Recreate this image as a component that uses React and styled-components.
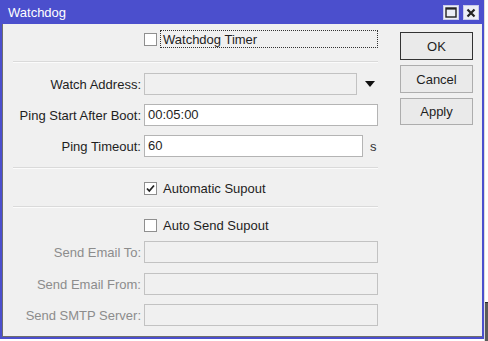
import React from 'react';
import styled, { createGlobalStyle } from 'styled-components';

const GlobalStyle = createGlobalStyle`
    html, body {
        margin: 0;
        padding: 0;
        background: #ffffff;
        font-family: "Liberation Sans", Arial, sans-serif;
        font-size: 13px;
    }
`;

const Desktop = styled.div`
    display: flex;
    width: 488px;
    height: 341px;
    overflow: hidden;
`;

const Window = styled.div`
    width: 484px;
    height: 339px;
    display: flex;
    flex-direction: column;
    box-sizing: border-box;
    background: #4b4fcd;
    padding: 0 2px 2px 2px;
`;

const TitleBar = styled.div`
    height: 24px;
    display: flex;
    align-items: center;
    padding-left: 6px;
    color: #ffffff;
    font-size: 13px;
`;

const TitleText = styled.div`
    flex: 1;
    padding-top: 1px;
`;

const TitleButtons = styled.div`
    display: flex;
    gap: 4px;
    margin-right: 3px;
    margin-top: 1px;
`;

const TitleButton = styled.div`
    width: 16px;
    height: 15px;
    box-sizing: border-box;
    background: #eceef6;
    border: 1px solid #c9cbe8;
    display: flex;
    align-items: center;
    justify-content: center;
`;

const Body = styled.div`
    flex: 1;
    display: flex;
    background: #f0f0f0;
    border-left: 1px solid #6e6e6e;
    border-bottom: 1px solid #6e6e6e;
`;

const Form = styled.div`
    width: 386px;
    display: flex;
    flex-direction: column;
`;

const Separator = styled.div`
    margin-left: 10px;
    width: 365px;
    height: 0;
    border-top: 1px solid #dadada;
    border-bottom: 1px solid #fbfbfb;
    margin-top: ${({ $top }) => $top}px;
`;

const CheckRow = styled.div`
    display: flex;
    align-items: center;
    height: 18px;
    padding-left: 141px;
    margin-top: ${({ $top }) => $top}px;
    color: #1e1e1e;
`;

const Box = styled.div`
    width: 13px;
    height: 13px;
    box-sizing: border-box;
    background: #ffffff;
    border: 1px solid #8f8f8f;
    display: flex;
    align-items: center;
    justify-content: center;
`;

const CheckLabel = styled.div`
    margin-left: 3px;
    height: 18px;
    line-height: 17px;
    box-sizing: border-box;
    padding-left: 2px;
    width: ${({ $width }) => ($width ? `${$width}px` : 'auto')};
    border: 1px ${({ $focus }) => ($focus ? 'dotted #333' : 'solid transparent')};
`;

const FieldRow = styled.div`
    display: flex;
    align-items: center;
    height: 22px;
    margin-top: ${({ $top }) => $top}px;
`;

const Label = styled.div`
    width: 138px;
    text-align: right;
    margin-right: 3px;
    white-space: nowrap;
    color: ${({ $disabled }) => ($disabled ? '#8c8c8c' : '#1e1e1e')};
`;

const Input = styled.div`
    width: ${({ $width }) => $width}px;
    height: 22px;
    box-sizing: border-box;
    border: 1px solid ${({ $disabled }) => ($disabled ? '#c2c2c2' : '#b4b4b4')};
    background: ${({ $disabled }) => ($disabled ? '#f0f0f0' : '#ffffff')};
    padding-left: 3px;
    line-height: 20px;
    color: #1e1e1e;
`;

const Unit = styled.div`
    margin-left: 7px;
    color: #333;
`;

const Arrow = styled.div`
    margin-left: 8px;
    width: 0;
    height: 0;
    border-left: 5px solid transparent;
    border-right: 5px solid transparent;
    border-top: 6px solid #111;
`;

const Buttons = styled.div`
    margin-left: 11px;
    padding-top: 8px;
    display: flex;
    flex-direction: column;
    gap: 5px;
`;

const Button = styled.div`
    width: 73px;
    height: ${({ $height }) => $height || 28}px;
    box-sizing: border-box;
    background: #eaeaea;
    border: 1px solid ${({ $primary }) => ($primary ? '#333333' : '#adadad')};
    display: flex;
    align-items: center;
    justify-content: center;
    color: #1e1e1e;
`;

const Backdrop = styled.div`
    flex: 1;
    display: flex;
    flex-direction: column;
    background: #ffffff;
    border-left: 1px solid #dcdcdc;
`;

const BackdropDark = styled.div`
    margin-top: auto;
    height: 38px;
    background: #5a5a5a;
    border-top: 1px solid #2a2a2a;
`;

const CheckMark = () => (
    <svg width="11" height="11" viewBox="0 0 11 11">
        <path d="M2 5.5 L4.3 8 L9 2.5" fill="none" stroke="#222" strokeWidth="1.8" />
    </svg>
);

const App = () => {
    return (
        <>
            <GlobalStyle />
            <Desktop>
                <Window>
                    <TitleBar>
                        <TitleText>Watchdog</TitleText>
                        <TitleButtons>
                            <TitleButton>
                                <svg width="12" height="11" viewBox="0 0 12 11">
                                    <rect x="1" y="1" width="10" height="9" fill="none" stroke="#222" strokeWidth="1.4" />
                                    <line x1="1" y1="1.8" x2="11" y2="1.8" stroke="#222" strokeWidth="1.6" />
                                </svg>
                            </TitleButton>
                            <TitleButton>
                                <svg width="10" height="10" viewBox="0 0 10 10">
                                    <path d="M1.5 1.5 L8.5 8.5 M8.5 1.5 L1.5 8.5" stroke="#222" strokeWidth="2.2" />
                                </svg>
                            </TitleButton>
                        </TitleButtons>
                    </TitleBar>
                    <Body>
                        <Form>
                            <CheckRow $top={6}>
                                <Box />
                                <CheckLabel $focus $width={218}>Watchdog Timer</CheckLabel>
                            </CheckRow>
                            <Separator $top={13} />
                            <FieldRow $top={10}>
                                <Label>Watch Address:</Label>
                                <Input $width={213} $disabled />
                                <Arrow />
                            </FieldRow>
                            <FieldRow $top={9}>
                                <Label>Ping Start After Boot:</Label>
                                <Input $width={234}>00:05:00</Input>
                            </FieldRow>
                            <FieldRow $top={9}>
                                <Label>Ping Timeout:</Label>
                                <Input $width={219}>60</Input>
                                <Unit>s</Unit>
                            </FieldRow>
                            <Separator $top={10} />
                            <CheckRow $top={10}>
                                <Box>
                                    <CheckMark />
                                </Box>
                                <CheckLabel>Automatic Supout</CheckLabel>
                            </CheckRow>
                            <Separator $top={9} />
                            <CheckRow $top={8}>
                                <Box />
                                <CheckLabel>Auto Send Supout</CheckLabel>
                            </CheckRow>
                            <FieldRow $top={7}>
                                <Label $disabled>Send Email To:</Label>
                                <Input $width={234} $disabled />
                            </FieldRow>
                            <FieldRow $top={10}>
                                <Label $disabled>Send Email From:</Label>
                                <Input $width={234} $disabled />
                            </FieldRow>
                            <FieldRow $top={9}>
                                <Label $disabled>Send SMTP Server:</Label>
                                <Input $width={234} $disabled />
                            </FieldRow>
                        </Form>
                        <Buttons>
                            <Button $primary>OK</Button>
                            <Button>Cancel</Button>
                            <Button $height={27}>Apply</Button>
                        </Buttons>
                    </Body>
                </Window>
                <Backdrop>
                    <BackdropDark />
                </Backdrop>
            </Desktop>
        </>
    );
};

export default App;
